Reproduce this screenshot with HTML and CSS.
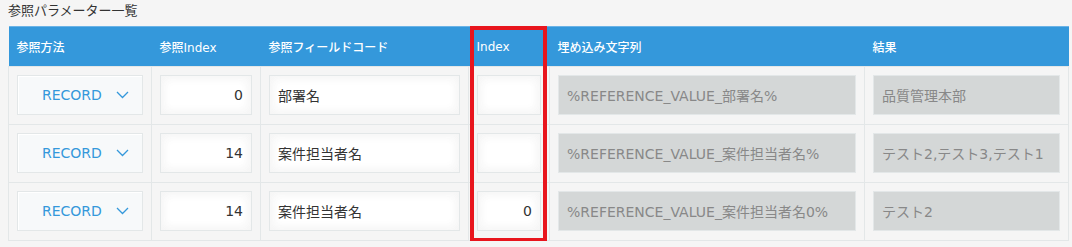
FILE: index.html
```html
<!DOCTYPE html>
<html lang="ja">
<head>
  <meta charset="UTF-8" />
  <title>参照パラメーター一覧</title>
  <link rel="stylesheet" href="styles.css">
</head>
<body>
  <div class="section-title">参照パラメーター一覧</div>

  <div class="table-wrap">
    <table class="param-table">
      <colgroup>
        <col class="col-method">
        <col class="col-ref-index">
        <col class="col-field">
        <col class="col-index">
        <col class="col-embed">
        <col class="col-result">
      </colgroup>
      <thead>
        <tr>
          <th>参照方法</th>
          <th>参照Index</th>
          <th>参照フィールドコード</th>
          <th>Index</th>
          <th>埋め込み文字列</th>
          <th>結果</th>
        </tr>
      </thead>
      <tbody>
        <tr>
          <td>
            <div class="select">
              <span>RECORD</span>
              <svg class="chevron" width="13" height="8" viewBox="0 0 13 8"><path d="M1 1l5.5 5.5L12 1" fill="none" stroke="#3498db" stroke-width="1.3"/></svg>
            </div>
          </td>
          <td><input class="text num" type="text" value="0"></td>
          <td><input class="text" type="text" value="部署名"></td>
          <td><input class="text num" type="text" value=""></td>
          <td><input class="text" type="text" value="%REFERENCE_VALUE_部署名%" disabled></td>
          <td><input class="text" type="text" value="品質管理本部" disabled></td>
        </tr>
        <tr>
          <td>
            <div class="select">
              <span>RECORD</span>
              <svg class="chevron" width="13" height="8" viewBox="0 0 13 8"><path d="M1 1l5.5 5.5L12 1" fill="none" stroke="#3498db" stroke-width="1.3"/></svg>
            </div>
          </td>
          <td><input class="text num" type="text" value="14"></td>
          <td><input class="text" type="text" value="案件担当者名"></td>
          <td><input class="text num" type="text" value=""></td>
          <td><input class="text" type="text" value="%REFERENCE_VALUE_案件担当者名%" disabled></td>
          <td><input class="text" type="text" value="テスト2,テスト3,テスト1" disabled></td>
        </tr>
        <tr>
          <td>
            <div class="select">
              <span>RECORD</span>
              <svg class="chevron" width="13" height="8" viewBox="0 0 13 8"><path d="M1 1l5.5 5.5L12 1" fill="none" stroke="#3498db" stroke-width="1.3"/></svg>
            </div>
          </td>
          <td><input class="text num" type="text" value="14"></td>
          <td><input class="text" type="text" value="案件担当者名"></td>
          <td><input class="text num" type="text" value="0"></td>
          <td><input class="text" type="text" value="%REFERENCE_VALUE_案件担当者名0%" disabled></td>
          <td><input class="text" type="text" value="テスト2" disabled></td>
        </tr>
      </tbody>
    </table>

    <div class="highlight"></div>
  </div>
</body>
</html>
```

FILE: styles.css
```css
body {
  margin: 0;
  padding: 0 4px 0 8px;
  background-color: #f5f5f5;
  font-family: "DejaVu Sans", "Noto Sans CJK JP", sans-serif;
  color: #333;
}

.section-title {
  height: 26px;
  line-height: 22px;
  font-size: 13px;
  color: #333;
}

.table-wrap {
  position: relative;
  width: 1060px;
}

.param-table {
  width: 1060px;
  border-collapse: collapse;
  table-layout: fixed;
}

.col-method { width: 143px; }
.col-ref-index { width: 109px; }
.col-field { width: 208px; }
.col-index { width: 81px; }
.col-embed { width: 315px; }
.col-result { width: 204px; }

.param-table th {
  height: 39px;
  padding: 0 8px;
  background-color: #3498db;
  border-top: 1px solid #6bb3e6;
  color: #fff;
  font-size: 12px;
  font-weight: 500;
  text-align: left;
}

.param-table td {
  padding: 8px 8px 9px;
  border: 1px solid #e3e7e8;
  background-color: #f5f5f5;
}

.select {
  display: flex;
  align-items: center;
  height: 40px;
  box-sizing: border-box;
  padding-left: 24px;
  gap: 14px;
  background-color: #f7f9fa;
  border: 1px solid #e3e7e8;
  box-shadow: 1px 1px 1px #fff inset;
  color: #3498db;
  font-size: 14px;
}

.chevron {
  display: block;
}

input.text {
  display: block;
  width: 100%;
  height: 40px;
  box-sizing: border-box;
  padding: 0 8px;
  margin: 0;
  background-color: #fff;
  border: 1px solid #e3e7e8;
  box-shadow: 1px 1px 12px #f5f5f5 inset, -1px -1px 12px #f5f5f5 inset;
  font-family: "DejaVu Sans", "Noto Sans CJK JP", sans-serif;
  font-size: 14px;
  color: #333;
  outline: none;
}

input.num {
  text-align: right;
}

input.text:disabled {
  background-color: #d4d7d7;
  box-shadow: none;
  color: #888;
}

.highlight {
  position: absolute;
  left: 462px;
  top: 0;
  width: 77px;
  height: 216px;
  box-sizing: border-box;
  border: 4px solid #e8151d;
}
```
